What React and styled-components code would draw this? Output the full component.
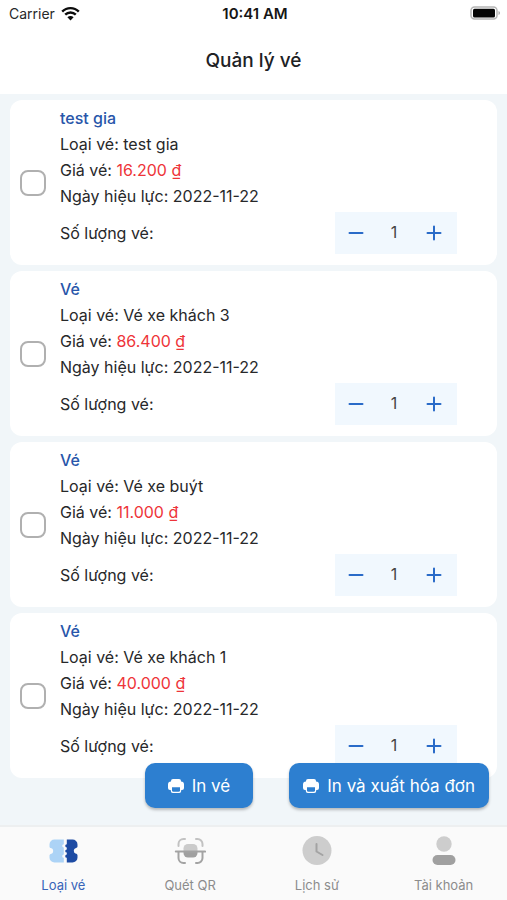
import { useState } from "react";
import styled, { createGlobalStyle } from "styled-components";

const GlobalStyle = createGlobalStyle`
  * {
    box-sizing: border-box;
  }

  body {
    margin: 0;
    font-family: Inter, "Noto Sans", sans-serif;
    color: #27282a;
    background-color: #f1f6f9;
  }

  button, input {
    font-family: inherit;
  }
`;

const Screen = styled.div`
  display: flex;
  flex-direction: column;
  height: 100vh;
`;

const StatusBar = styled.div`
  display: grid;
  grid-template-columns: 1fr auto 1fr;
  align-items: center;
  height: 26px;
  padding: 0 6px 0 9px;
  background-color: white;
  font-size: 14px;
`;

const Carrier = styled.div`
  display: flex;
  align-items: center;
  gap: 6px;
`;

const Clock = styled.time`
  font-size: 15px;
  font-weight: 600;
  color: #161616;
`;

const BatteryIcon = styled.svg`
  justify-self: end;
`;

const Header = styled.header`
  display: flex;
  align-items: center;
  justify-content: center;
  height: 68px;
  background-color: white;
`;

const Title = styled.h1`
  margin: 0;
  font-size: 19px;
  font-weight: 500;
  color: #202124;
`;

const Content = styled.main`
  position: relative;
  flex: 1;
  min-height: 0;
`;

const List = styled.ul`
  display: flex;
  flex-direction: column;
  gap: 6px;
  height: 100%;
  margin: 0;
  padding: 6px 10px;
  overflow: hidden auto;
  scrollbar-width: none;
  list-style-type: none;
`;

const Card = styled.li`
  display: flex;
  flex-shrink: 0;
  align-items: center;
  gap: 14px;
  padding: 5px 40px 5px 10px;
  border-radius: 12px;
  background-color: white;
`;

const Checkbox = styled.input`
  appearance: none;
  flex-shrink: 0;
  width: 26px;
  height: 26px;
  margin: 0;
  border: 2px solid #b0b0b0;
  border-radius: 8px;
  background-color: white;

  &:checked {
    border-color: #2d7fd0;
    background-color: #2d7fd0;
  }
`;

const Details = styled.div`
  flex: 1;
  padding-bottom: 6px;
  font-size: 16px;
  line-height: 26px;
`;

const Name = styled.label`
  display: block;
  font-weight: 500;
  color: #2856aa;
`;

const Line = styled.div``;

const Price = styled.span`
  color: #ee3439;
`;

const QuantityRow = styled.div`
  display: flex;
  align-items: center;
  justify-content: space-between;
  margin-top: 3px;
`;

const Stepper = styled.div`
  display: grid;
  grid-template-columns: 42px 34px 1fr;
  align-items: center;
  width: 122px;
  height: 42px;
  background-color: #f1f8fe;
`;

const StepButton = styled.button`
  display: flex;
  align-items: center;
  justify-content: center;
  height: 100%;
  padding: 0;
  border: none;
  background: none;
  color: #2a6bc8;

  &:hover {
    cursor: pointer;
  }
`;

const Quantity = styled.output`
  padding-bottom: 2px;
  text-align: center;
  color: #444;
`;

const Actions = styled.div`
  position: absolute;
  right: 18px;
  bottom: 17px;
  display: flex;
  gap: 36px;
`;

const ActionButton = styled.button`
  display: flex;
  align-items: center;
  gap: 8px;
  height: 45px;
  padding: 0 ${(props) => (props.$wide ? 23 : 14)}px;
  border: none;
  border-radius: 10px;
  background-color: #2d7fd0;
  box-shadow: 0 2px 3px rgba(0, 0, 0, 0.25);
  color: white;
  font-size: 17px;

  &:hover {
    cursor: pointer;
  }
`;

const TabBar = styled.nav`
  display: grid;
  grid-template-columns: repeat(4, 1fr);
  height: 75px;
  border-top: 2px solid #edeff0;
  background-color: #fafafa;
`;

const Tab = styled.a`
  display: flex;
  flex-direction: column;
  align-items: center;
  gap: 9px;
  padding-top: 8px;
  font-size: 13px;
  line-height: 18px;
  text-decoration: none;
  color: ${(props) => (props.$active ? "#3864b8" : "#8c8c8c")};
`;

const WifiIcon = () => (
  <svg width="19" height="15" viewBox="0 0 19 15" fill="none" stroke="#0c0c0c" strokeWidth="2.4">
    <path d="M1.2 5.6C5.8 .9 13.2 .9 17.8 5.6" />
    <path d="M4.2 8.7c3-3 7.6-3 10.6 0" />
    <path d="M9.5 14.4 6.4 11.2c1.8-1.6 4.4-1.6 6.2 0z" fill="#0c0c0c" stroke="none" />
  </svg>
);

const PrinterIcon = () => (
  <svg width="16" height="16" viewBox="0 0 16 16" fill="white">
    <path d="M5 1h6a2 2 0 0 1 2 2v1H3V3a2 2 0 0 1 2-2z" />
    <path d="M3 3.5h10a3 3 0 0 1 3 3V10a2 2 0 0 1-2 2H2a2 2 0 0 1-2-2V6.500a3 3 0 0 1 3-3z" />
    <rect x="2.800" y="8" width="10.400" height="7" rx="2" />
    <path d="M4 9.300h8v2.900a1.500 1.500 0 0 1-1.500 1.500h-5A1.500 1.500 0 0 1 4 12.200z" fill="#2d7fd0" />
  </svg>
);

const TicketIcon = () => (
  <svg width="32" height="32" viewBox="0 0 32 32">
    <path
      d="M7.500 4.500h9.300V9.200a1.600 1.600 0 0 0 0 3.200v7.200a1.600 1.600 0 0 0 0 3.200v4.700H7.500a5 5 0 0 1-5-5v-1.900c0-1 .8-1.700 1.500-1.700a3 3 0 0 0 0-5.800c-.7 0-1.500-.7-1.500-1.700V9.500a5 5 0 0 1 5-5z"
      fill="#acd3f6"
    />
    <path
      d="M19.800 4.500h5.700a5 5 0 0 1 5 5v1.700c0 1-.8 1.700-1.500 1.700a3 3 0 0 0 0 5.800c.7 0 1.500.7 1.500 1.700v2.100a5 5 0 0 1-5 5h-5.700v-4.700a1.600 1.600 0 0 1 0-3.200v-2a1.600 1.600 0 0 1 0-3.200v-2a1.600 1.600 0 0 1 0-3.200z"
      fill="#1d4ba3"
    />
  </svg>
);

const ScanIcon = () => (
  <svg width="32" height="32" viewBox="0 0 32 32" fill="none" strokeWidth="2" strokeLinecap="round">
    <path d="M4.500 11V9a5 5 0 0 1 5-5H11M22 4h1.500a5 5 0 0 1 5 5v2" stroke="#c2c2c2" />
    <path d="M9.500 16v-2.500a4.500 4.500 0 0 1 4.500-4.500h5a4.500 4.500 0 0 1 4.500 4.500V16z" fill="#cbcbcb" />
    <path d="M9.500 17h14v1a4.500 4.500 0 0 1-4.500 4.500h-5A4.500 4.500 0 0 1 9.500 18z" fill="#a0a0a0" />
    <path d="M1.800 16.600h29.400M4.500 17.500v5.500a5 5 0 0 0 5 5H11M22 28h1.500a5 5 0 0 0 5-5v-5.500" stroke="#a3a3a3" />
  </svg>
);

const HistoryIcon = () => (
  <svg width="32" height="32" viewBox="0 0 32 32">
    <circle cx="16" cy="15.500" r="14.500" fill="#cdcdcd" />
    <path d="M15.500 9v7.500l6 3.500" fill="none" stroke="#a3a3a3" strokeWidth="2" strokeLinecap="round" strokeLinejoin="round" />
  </svg>
);

const UserIcon = () => (
  <svg width="32" height="32" viewBox="0 0 32 32">
    <circle cx="16" cy="9" r="7.700" fill="#cdcdcd" />
    <rect x="4.500" y="20" width="23" height="10" rx="5" fill="#a0a0a0" />
  </svg>
);

const tickets = [
  { id: 1, name: "test gia", type: "test gia", price: "16.200", date: "2022-11-22" },
  { id: 2, name: "Vé", type: "Vé xe khách 3", price: "86.400", date: "2022-11-22" },
  { id: 3, name: "Vé", type: "Vé xe buýt", price: "11.000", date: "2022-11-22" },
  { id: 4, name: "Vé", type: "Vé xe khách 1", price: "40.000", date: "2022-11-22" },
];

const tabs = [
  { id: "tickets", label: "Loại vé", Icon: TicketIcon },
  { id: "scan", label: "Quét QR", Icon: ScanIcon },
  { id: "history", label: "Lịch sử", Icon: HistoryIcon },
  { id: "account", label: "Tài khoản", Icon: UserIcon },
];

const Ticket = ({ ticket }) => {
  const [checked, setChecked] = useState(false);
  const [quantity, setQuantity] = useState(1);

  const decrease = () => {
    setQuantity(Math.max(1, quantity - 1));
  };

  const increase = () => {
    setQuantity(quantity + 1);
  };

  return (
    <Card>
      <Checkbox
        type="checkbox"
        id={`ticket-${ticket.id}`}
        checked={checked}
        onChange={(e) => setChecked(e.target.checked)}
      />
      <Details>
        <Name htmlFor={`ticket-${ticket.id}`}>{ticket.name}</Name>
        <Line>Loại vé: {ticket.type}</Line>
        <Line>
          Giá vé: <Price>{ticket.price} ₫</Price>
        </Line>
        <Line>Ngày hiệu lực: {ticket.date}</Line>
        <QuantityRow>
          <span id={`quantity-${ticket.id}`}>Số lượng vé:</span>
          <Stepper>
            <StepButton type="button" aria-label="Giảm" onClick={decrease}>
              <svg width="16" height="16" viewBox="0 0 16 16" stroke="currentColor" strokeWidth="2" strokeLinecap="round">
                <path d="M1.500 8h13" />
              </svg>
            </StepButton>
            <Quantity aria-labelledby={`quantity-${ticket.id}`}>{quantity}</Quantity>
            <StepButton type="button" aria-label="Tăng" onClick={increase}>
              <svg width="16" height="16" viewBox="0 0 16 16" stroke="currentColor" strokeWidth="2" strokeLinecap="round">
                <path d="M1.500 8h13M8 1.500v13" />
              </svg>
            </StepButton>
          </Stepper>
        </QuantityRow>
      </Details>
    </Card>
  );
};

const App = () => {
  const [active, setActive] = useState("tickets");

  return (
    <Screen>
      <GlobalStyle />
      <StatusBar>
        <Carrier>
          Carrier
          <WifiIcon />
        </Carrier>
        <Clock>10:41 AM</Clock>
        <BatteryIcon width="31" height="14" viewBox="0 0 31 14">
          <rect x="1" y="1" width="26" height="12" rx="3.500" fill="white" stroke="#b5b5b5" strokeWidth="1.500" />
          <rect x="3" y="2.800" width="22" height="8.600" rx="1.500" fill="#050505" />
          <path d="M28.500 5c2 .8 2 3.200 0 4z" fill="#a8a8a8" />
        </BatteryIcon>
      </StatusBar>
      <Header>
        <Title>Quản lý vé</Title>
      </Header>
      <Content>
        <List>
          {tickets.map((ticket) => (
            <Ticket key={ticket.id} ticket={ticket} />
          ))}
        </List>
        <Actions>
          <ActionButton type="button" $wide>
            <PrinterIcon />
            In vé
          </ActionButton>
          <ActionButton type="button">
            <PrinterIcon />
            In và xuất hóa đơn
          </ActionButton>
        </Actions>
      </Content>
      <TabBar>
        {tabs.map(({ id, label, Icon }) => (
          <Tab key={id} href={`#${id}`} $active={id === active} onClick={() => setActive(id)}>
            <Icon />
            {label}
          </Tab>
        ))}
      </TabBar>
    </Screen>
  );
};

export default App;
